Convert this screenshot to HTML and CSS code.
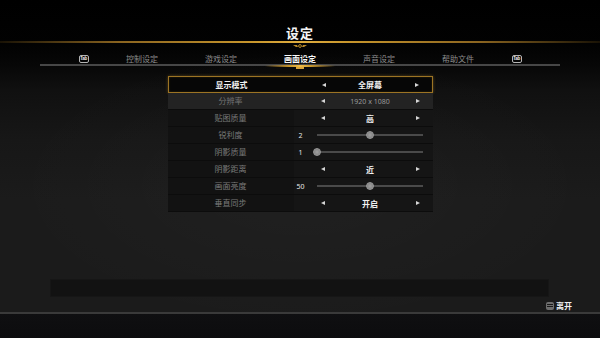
FILE: index.html
```html
<!DOCTYPE html>
<html lang="zh-CN">
<head>
<meta charset="utf-8">
<title>设定</title>
<link rel="stylesheet" href="styles.css">
</head>
<body>
<div class="screen">
  <header class="head">
    <h1 class="title">设定</h1>
    <div class="gold-line"></div>
    <svg class="ornament" width="14" height="4" viewBox="0 0 14 4">
      <path d="M0 1 L4 1 L5 3 L3 3 Z M14 1 L10 1 L9 3 L11 3 Z" fill="#b8892a"/>
      <circle cx="7" cy="2" r="1.4" fill="none" stroke="#c9982f" stroke-width="0.9"/>
    </svg>
  </header>

  <nav class="tabs">
    <span class="key">Tab</span>
    <div class="tab-list">
      <span class="tab">控制设定</span>
      <span class="tab">游戏设定</span>
      <span class="tab active">画面设定</span>
      <span class="tab">声音设定</span>
      <span class="tab">帮助文件</span>
    </div>
    <span class="key">Tab</span>
  </nav>

  <section class="panel">
    <div class="row selected">
      <span class="label">显示模式</span>
      <span class="num"></span>
      <span class="control"><i class="arrow left"></i><b class="value">全屏幕</b><i class="arrow right"></i></span>
    </div>
    <div class="row hover">
      <span class="label">分辨率</span>
      <span class="num"></span>
      <span class="control"><i class="arrow left"></i><span class="value dim">1920 x 1080</span><i class="arrow right"></i></span>
    </div>
    <div class="row">
      <span class="label">贴图质量</span>
      <span class="num"></span>
      <span class="control"><i class="arrow left"></i><b class="value">高</b><i class="arrow right"></i></span>
    </div>
    <div class="row">
      <span class="label">锐利度</span>
      <span class="num">2</span>
      <span class="control slider"><span class="track"><span class="thumb" style="left:50%"></span></span></span>
    </div>
    <div class="row">
      <span class="label">阴影质量</span>
      <span class="num">1</span>
      <span class="control slider"><span class="track"><span class="thumb" style="left:0%"></span></span></span>
    </div>
    <div class="row">
      <span class="label">阴影距离</span>
      <span class="num"></span>
      <span class="control"><i class="arrow left"></i><b class="value">近</b><i class="arrow right"></i></span>
    </div>
    <div class="row">
      <span class="label">画面亮度</span>
      <span class="num">50</span>
      <span class="control slider"><span class="track"><span class="thumb" style="left:50%"></span></span></span>
    </div>
    <div class="row">
      <span class="label">垂直同步</span>
      <span class="num"></span>
      <span class="control"><i class="arrow left"></i><b class="value">开启</b><i class="arrow right"></i></span>
    </div>
  </section>

  <div class="hint-box"></div>

  <div class="exit-row">
    <span class="esc"><i></i><i></i></span>
    <span class="exit-text">离开</span>
  </div>

  <footer class="footer"></footer>
</div>
</body>
</html>
```

FILE: styles.css
```css
* { box-sizing: border-box; }

html, body {
  margin: 0;
  padding: 0;
  background: #000;
}

body {
  width: 600px;
  height: 338px;
  overflow: hidden;
  font-family: "Noto Sans CJK SC", "Noto Sans", sans-serif;
  color: #fff;
}

.screen {
  width: 600px;
  height: 338px;
  display: flex;
  flex-direction: column;
  background:
    radial-gradient(ellipse 70% 60% at 50% 55%, rgba(255,255,255,0.025), rgba(0,0,0,0) 70%),
    linear-gradient(to bottom, #000 0px, #020202 45px, #070707 65px, #101010 90px, #171717 140px, #1b1b1b 200px, #1b1b1b 300px);
}

/* ---------- header ---------- */
.head {
  display: flex;
  flex-direction: column;
  align-items: center;
}

.title {
  margin: 0;
  padding-top: 25px;
  height: 41px;
  font-size: 13px;
  line-height: 16px;
  font-weight: 700;
  letter-spacing: 1px;
  color: #f4f4f4;
}

.gold-line {
  width: 600px;
  height: 2px;
  background: linear-gradient(90deg, rgba(120,85,20,0.2) 0%, #8a6420 20%, #c8962c 42%, #e0ae40 50%, #c8962c 58%, #8a6420 80%, rgba(120,85,20,0.2) 100%);
}

.ornament {
  display: block;
  margin-top: 1px;
  height: 4px;
}

/* ---------- tabs ---------- */
.tabs {
  margin: 6px 40px 0;
  height: 12px;
  display: flex;
  justify-content: center;
  align-items: center;
  gap: 14px;
  border-bottom: 2px solid #474747;
  padding-bottom: 1px;
}

.key {
  width: 10px;
  height: 8px;
  border: 1px solid #b5b5b5;
  border-radius: 2px;
  font-family: "Liberation Sans", sans-serif;
  font-size: 4.5px;
  line-height: 6px;
  text-align: center;
  color: #f0f0f0;
  font-weight: 700;
  letter-spacing: -0.2px;
  overflow: hidden;
  white-space: nowrap;
}

.tab-list {
  display: flex;
}

.tab {
  position: relative;
  width: 79px;
  text-align: center;
  font-size: 8px;
  line-height: 10px;
  color: #8c8c8c;
}

.tab.active {
  color: #fafafa;
  font-weight: 700;
}

.tab.active::after {
  content: "";
  position: absolute;
  left: 50%;
  bottom: -3px;
  width: 70px;
  height: 2px;
  transform: translateX(-50%);
  background: linear-gradient(90deg, rgba(200,150,40,0), #c8962c 35%, #f0bd4a 50%, #c8962c 65%, rgba(200,150,40,0));
}

.tab.active::before {
  content: "";
  position: absolute;
  left: 50%;
  bottom: -5px;
  width: 8px;
  height: 2px;
  transform: translateX(-50%);
  background: #d9a43a;
}

/* ---------- settings panel ---------- */
.panel {
  width: 265px;
  margin: 10px auto 0;
  display: flex;
  flex-direction: column;
}

.row {
  height: 17px;
  display: grid;
  grid-template-columns: 126px 14px 1fr;
  align-items: center;
  background: #151515;
  border-bottom: 1px solid #0c0c0c;
  font-size: 8px;
}

.row .label {
  text-align: center;
  color: #7a7a7a;
  line-height: 16px;
  background: #121212;
}

.row.hover {
  background: #232323;
}
.row.hover .label {
  background: #232323;
  color: #747474;
}

.row.selected {
  background: #060606;
  border: 1px solid #9c7424;
  box-shadow: 0 0 3px rgba(200,150,45,0.4), inset 0 0 2px rgba(200,150,45,0.25);
}
.row.selected .label {
  background: transparent;
  color: #f2f2f2;
  font-weight: 700;
  line-height: 15px;
}

.num {
  text-align: center;
  font-size: 7px;
  color: #e6e6e6;
  font-family: "Noto Sans", sans-serif;
}

.control {
  display: flex;
  align-items: center;
  justify-content: space-between;
  padding: 0 13px 0 13px;
  height: 100%;
}

.value {
  font-weight: 700;
  color: #f2f2f2;
  font-size: 8px;
}

.value.dim {
  font-weight: 400;
  font-size: 7px;
  color: #9a9a9a;
  font-family: "Noto Sans", sans-serif;
}

.arrow {
  width: 0;
  height: 0;
  border-top: 2.5px solid transparent;
  border-bottom: 2.5px solid transparent;
}
.arrow.left { border-right: 4px solid #d6d6d6; }
.arrow.right { border-left: 4px solid #d6d6d6; }

.control.slider {
  padding: 0 10px 0 9px;
}

.track {
  position: relative;
  flex: 1;
  height: 2px;
  background: #4a4a4a;
}

.thumb {
  position: absolute;
  top: 50%;
  width: 8px;
  height: 8px;
  border-radius: 50%;
  transform: translate(-4px, -50%);
  background: radial-gradient(circle at 50% 50%, #a0a0a0 0, #8a8a8a 55%, #6a6a6a 100%);
  border: 1px solid #9a9a9a;
}

/* ---------- bottom ---------- */
.hint-box {
  margin: auto 51px 0 50px;
  height: 18px;
  background: #121212;
  border: 1px solid #161616;
}

.exit-row {
  height: 15px;
  padding: 2px 28px 0 0;
  display: flex;
  justify-content: flex-end;
  align-items: center;
  gap: 2px;
}

.esc {
  width: 8px;
  height: 8px;
  border-radius: 2px;
  background: #6e6e6e;
  display: flex;
  flex-direction: column;
  justify-content: center;
  gap: 1px;
  padding: 0 1px;
}
.esc i {
  display: block;
  height: 1px;
  background: #1a1a1a;
}

.exit-text {
  font-size: 8px;
  line-height: 10px;
  font-weight: 700;
  color: #f0f0f0;
}

.footer {
  height: 26px;
  border-top: 2px solid #3a3a3a;
  background: linear-gradient(to bottom, #0f0f11, #0c0c0e);
}
```
